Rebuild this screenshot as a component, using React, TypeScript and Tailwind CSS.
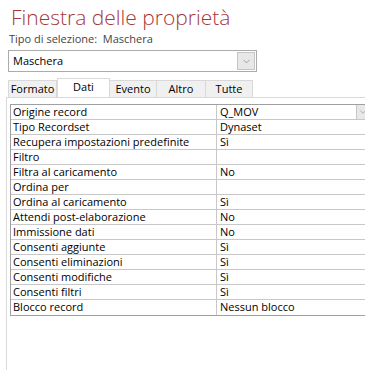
import { ChevronDown } from "lucide-react";

const rows: [string, string][] = [
  ["Origine record", "Q_MOV"],
  ["Tipo Recordset", "Dynaset"],
  ["Recupera impostazioni predefinite", "Sì"],
  ["Filtro", ""],
  ["Filtra al caricamento", "No"],
  ["Ordina per", ""],
  ["Ordina al caricamento", "Sì"],
  ["Attendi post-elaborazione", "No"],
  ["Immissione dati", "No"],
  ["Consenti aggiunte", "Sì"],
  ["Consenti eliminazioni", "Sì"],
  ["Consenti modifiche", "Sì"],
  ["Consenti filtri", "Sì"],
  ["Blocco record", "Nessun blocco"],
];

const tabs = [
  { name: "Formato", w: "w-[49px]" },
  { name: "Dati", w: "w-[53px]" },
  { name: "Evento", w: "w-[48px]" },
  { name: "Altro", w: "w-[50px]" },
  { name: "Tutte", w: "w-[48px]" },
];

export default function App() {
  return (
    <div className="w-[365px] h-[370px] overflow-hidden bg-white flex flex-col text-[11px] text-black font-['Open_Sans','Noto_Sans',sans-serif]">
      {/* Header */}
      <div className="ml-[11px] mt-[3px] text-[21px] leading-[28px] font-light text-[#a4373a]">
        Finestra delle proprietà
      </div>
      <div className="ml-[9px] leading-[16px] text-[#444] whitespace-pre">Tipo di selezione:  Maschera</div>

      {/* Selection combo */}
      <div className="ml-[8px] mt-[3px] w-[249px] h-[22px] border border-[#ababab] flex items-center">
        <span className="pl-[4px]">Maschera</span>
        <div className="ml-auto mr-px w-[18px] h-[18px] bg-[#e8e8e8] border border-[#c4c4c4] flex items-center justify-center text-[#666]">
          <ChevronDown size={11} strokeWidth={1.2} />
        </div>
      </div>

      {/* Tab bar */}
      <div className="ml-[8px] mt-[6px] flex items-end h-[19px]">
        {tabs.map((t) => (
          <div
            key={t.name}
            className={`${t.w} flex justify-center border border-b-0 border-[#d9d9d9] ${
              t.name === "Dati"
                ? "h-[19px] bg-white items-start"
                : "h-[17px] bg-[#f0f0f0] items-end -ml-px first:ml-0"
            } leading-[16px]`}
          >
            {t.name}
          </div>
        ))}
      </div>

      {/* Sheet */}
      <div className="flex-1 ml-[6px] border-t border-l border-[#d9d9d9] pt-[6px] pl-[3px]">
        <div className="w-[360px] border border-[#a0a0a0] grid grid-cols-[206px_1fr]">
          {rows.map(([label, value], i) => (
            <div key={label} className="contents">
              <div
                className={`h-[15px] leading-[14px] pl-[2px] whitespace-nowrap overflow-hidden border-r border-[#c8c8c8] ${
                  i < rows.length - 1 ? "border-b" : ""
                }`}
              >
                {label}
              </div>
              <div
                className={`h-[15px] leading-[14px] pl-[3px] flex whitespace-nowrap border-[#c8c8c8] ${
                  i < rows.length - 1 ? "border-b" : ""
                }`}
              >
                <span>{value}</span>
                {i === 0 && (
                  <div className="ml-auto w-[13px] h-[14px] bg-[#e8e8e8] border-l border-[#c4c4c4] flex items-center justify-center text-[#777]">
                    <ChevronDown size={10} strokeWidth={1.2} />
                  </div>
                )}
              </div>
            </div>
          ))}
        </div>
      </div>
    </div>
  );
}
